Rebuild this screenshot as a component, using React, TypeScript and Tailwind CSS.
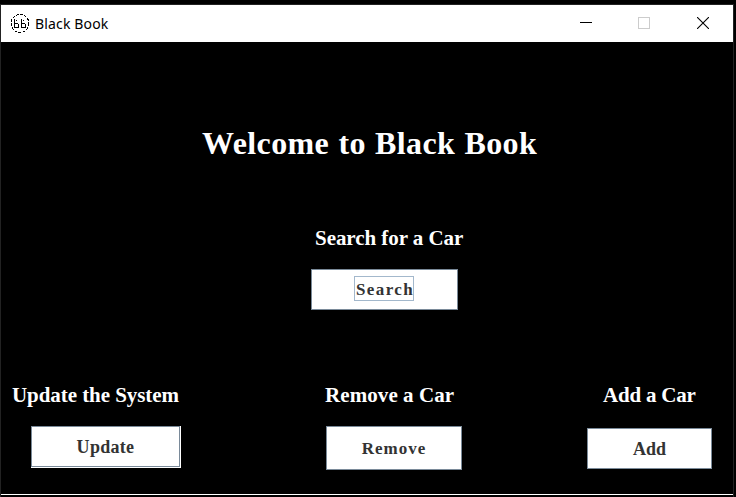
import React from "react";

const serif = "font-['Liberation_Serif','Times_New_Roman',serif] font-bold whitespace-nowrap";

function Logo() {
  return (
    <svg width="20" height="20" viewBox="0 0 20 20" fill="none" stroke="#000" shapeRendering="crispEdges">
      <circle cx="10" cy="9.5" r="9" strokeWidth="1" strokeDasharray="3 1.2" />
      <path d="M4.5 5v9M4 9.5h4M8.5 10v4M4 13.5h4M11.5 5v9M11 9.5h4M15.5 10v4M12 13.5h3M6 6.5h1M13 6.5h1" />
    </svg>
  );
}

function TitleBar() {
  return (
    <header className="flex h-[37px] shrink-0 items-center bg-white pl-[9px] text-black">
      <Logo />
      <span className="ml-[5px] font-['Noto_Sans','Open_Sans',sans-serif] text-[14px] leading-5 tracking-[0.15px] whitespace-nowrap">
        Black Book
      </span>
      <div className="ml-auto flex h-full items-start pt-[12px]">
        <svg width="12" height="12" shapeRendering="crispEdges" className="mr-[46px]">
          <path d="M0 5.5h12" stroke="#000" />
        </svg>
        <svg width="12" height="12" className="mr-[47px]">
          <rect x=".5" y=".5" width="11" height="11" fill="none" stroke="#ccc" />
        </svg>
        <svg width="12" height="12" className="mr-[24px]">
          <path d="M0 0l12 12M12 0L0 12" stroke="#000" strokeWidth="1.1" />
        </svg>
      </div>
    </header>
  );
}

const label = `${serif} text-[21px] leading-6 text-white`;
const button = `${serif} flex items-center justify-center border border-[#7a8a99] bg-white text-[#333]`;

export default function App() {
  return (
    <div className="h-[497px] w-[736px] overflow-hidden bg-black pt-1">
      <div className="flex h-[493px] w-[734px] flex-col border-x border-t border-[#222]">
        <TitleBar />
        <main className="flex h-[453px] shrink-0 flex-col border-b border-white bg-black">
          <h1 className={`${serif} mt-[83px] ml-[201px] text-[32px] leading-9 tracking-[0.4px] [word-spacing:0.8px] text-white`}>
            Welcome to Black Book
          </h1>
          <section className="mt-[65px] ml-[310px] w-[160px]">
            <h2 className={`${label} ml-[4px] tracking-[-0.05px]`}>Search for a Car</h2>
            <button className={`${button} mt-[19px] h-[41px] w-[147px] items-start justify-start pt-[6px] pl-[42px] text-[17px] leading-5`}>
              <span className="flex h-[25px] w-[60px] items-center border border-[#a3b8cc] pt-[2px] pl-px tracking-[1.4px]">
                Search
              </span>
            </button>
          </section>
          <div className="mt-[73px] flex items-start">
            <section className="ml-[11px] w-[170px]">
              <h2 className={`${label} tracking-[-0.06px]`}>Update the System</h2>
              <div className="mt-[19px] ml-[19px] h-[42px] w-[150px] bg-white">
                <button className={`${button} h-[41px] w-[149px] text-[18px] leading-5 tracking-[0.3px]`}>Update</button>
              </div>
            </section>
            <section className="ml-[143px] w-[140px]">
              <h2 className={`${label} tracking-[0.08px]`}>Remove a Car</h2>
              <button className={`${button} mt-[19px] ml-px h-[44px] w-[136px] pt-[2px] text-[17px] leading-5 tracking-[1px]`}>
                Remove
              </button>
            </section>
            <section className="ml-[121px] w-[130px]">
              <h2 className={`${label} ml-[17px] tracking-[-0.22px]`}>Add a Car</h2>
              <button className={`${button} mt-[21px] ml-px h-[41px] w-[125px] text-[18px] leading-5`}>Add</button>
            </section>
          </div>
        </main>
      </div>
    </div>
  );
}
